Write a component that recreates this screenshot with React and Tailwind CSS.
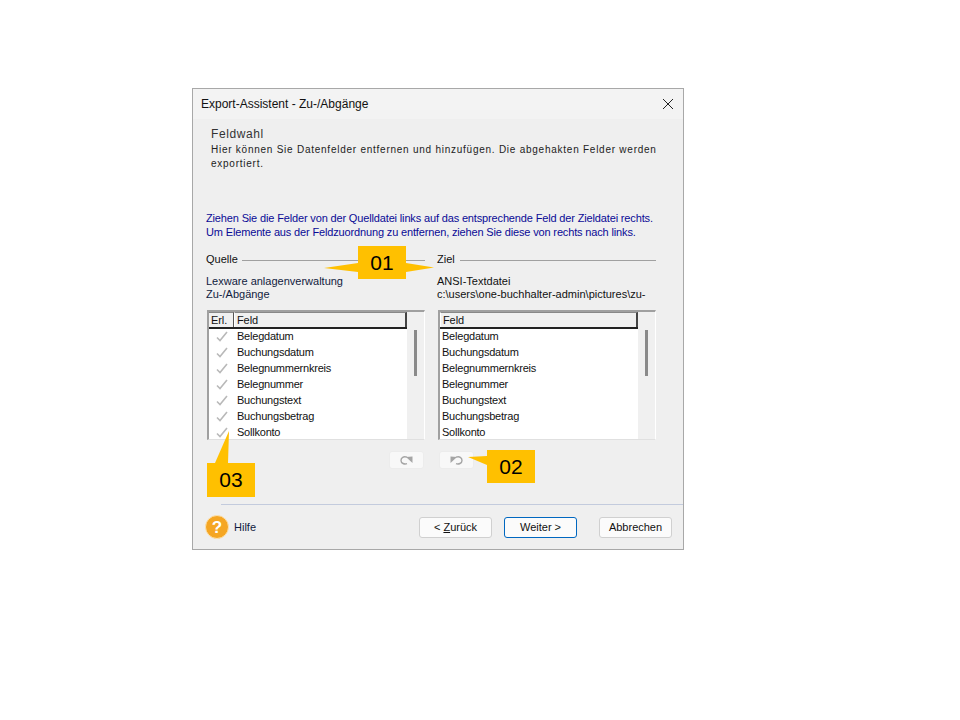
const FONT = "font-['Liberation_Sans',sans-serif]";
const fields = ["Belegdatum","Buchungsdatum","Belegnummernkreis","Belegnummer","Buchungstext","Buchungsbetrag","Sollkonto"];

function Check() {
  return (
    <svg width="12" height="11" viewBox="0 0 12 11" className="shrink-0">
      <path d="M1 6.5 L4 9.5 L11 1" fill="none" stroke="#b9b9b9" strokeWidth="1.6" />
    </svg>
  );
}

function List({ withCheck }) {
  return (
    <div className="h-[130px] border-t-2 border-l-2 border-r border-b border-t-[#a0a0a0] border-l-[#a0a0a0] border-r-white border-b-[#e0e0e0] bg-[#f0f0f0] flex overflow-hidden">
      <div className="flex-1 flex flex-col bg-white min-w-0">
        <div className="h-[17px] flex shrink-0 bg-[#f0f0f0] border-b-2 border-[#222] text-[11px] tracking-[-0.1px] leading-[15px] text-[#111]">
          {withCheck && <div className="w-[25px] pl-[2px] border-r border-[#555] border-t border-t-[#888]">Erl.</div>}
          <div className="flex-1 pl-[2px] border-r-2 border-[#444] border-t border-t-[#888] border-l border-l-white">Feld</div>
        </div>
        <div className="flex-1 overflow-hidden -mt-px">
          {fields.map((f) => (
            <div key={f} className="h-[16px] flex items-center text-[11px] tracking-[-0.22px] leading-[16px] text-[#111]">
              {withCheck && <div className="w-[26px] pl-[7px] flex items-center"><Check /></div>}
              <span className="pl-[2px]">{f}</span>
            </div>
          ))}
        </div>
      </div>
      <div className="w-[17px] shrink-0 flex justify-center pt-[18px]">
        <div className="w-[3px] h-[46px] bg-[#8a8a8a]" />
      </div>
    </div>
  );
}

function Btn({ children, cls = "" }) {
  return (
    <button className={`w-[73px] h-[21px] rounded-[3px] border bg-[#fbfbfb] text-[11px] leading-[18px] text-[#111] ${cls}`}>{children}</button>
  );
}

function SmallBtn({ flip }) {
  return (
    <div className="w-[35px] h-[18px] rounded-[3px] bg-[#f8f8f8] border border-[#ececec] flex items-center justify-center">
      <svg width="13" height="9" viewBox="0 0 13 9" className={flip ? "-scale-x-100" : ""}>
        <path d="M7 1.2 C3.5 0 1 1.6 1 4.4 C1 7.4 4.5 8.6 7 7.6" fill="none" stroke="#a5a5a5" strokeWidth="1.4" />
        <path d="M6 1 L12.5 0.5 L12.5 7 Z" fill="#a5a5a5" />
      </svg>
    </div>
  );
}

function Header({ title, lineCls }) {
  return (
    <div className="flex items-center h-[14px] text-[11px] leading-[14px] text-[#111]">
      <span>{title}</span>
      <div className={`h-px bg-[#a0a0a0] mt-[3px] ml-auto ${lineCls}`} />
    </div>
  );
}

function Callouts() {
  const fill = "#ffc000";
  return (
    <>
      <div className="absolute left-[324px] top-[246px] w-[110px] h-[33px] pointer-events-none">
        <svg width="110" height="33" className="absolute inset-0">
          <path d="M34 0 H82 V17 L110 21.5 L82 26 V33 H34 V26 L0 22 L34 17 Z" fill={fill} />
        </svg>
        <span className="absolute left-[34px] top-0 w-[48px] h-[33px] flex items-center justify-center text-[21px] text-black">01</span>
      </div>
      <div className="absolute left-[468px] top-[450px] w-[67px] h-[33px] pointer-events-none">
        <svg width="67" height="33" className="absolute inset-0">
          <path d="M19 0 H67 V33 H19 V15 L0 7 L19 6 Z" fill={fill} />
        </svg>
        <span className="absolute left-[19px] top-0 w-[48px] h-[33px] flex items-center justify-center text-[21px] text-black">02</span>
      </div>
      <div className="absolute left-[207px] top-[431px] w-[48px] h-[66px] pointer-events-none">
        <svg width="48" height="66" className="absolute inset-0">
          <path d="M8 32 L22 0 L21 32 H48 V66 H0 V32 Z" fill={fill} />
        </svg>
        <span className="absolute left-0 top-[32px] w-[48px] h-[34px] flex items-center justify-center text-[21px] text-black">03</span>
      </div>
    </>
  );
}

export default function App() {
  return (
    <div className={`relative w-[960px] h-[720px] bg-white pt-[88px] pl-[192px] ${FONT}`}>
      <div className="w-[492px] h-[462px] border border-[#a8a8a8] bg-[#efefef] flex flex-col">
        <div className="h-[30px] shrink-0 bg-[#f3f3f3] flex items-center justify-between pl-[8px] pr-[9px]">
          <span className="text-[12px] text-[#111] leading-[16px]">Export-Assistent - Zu-/Abgänge</span>
          <svg width="12" height="12" viewBox="0 0 12 12"><path d="M1 1 L11 11 M11 1 L1 11" stroke="#222" strokeWidth="1" /></svg>
        </div>
        <div className="pl-[18px] pt-[8px] h-[92px] shrink-0 text-[#222]">
          <div className="text-[12px] leading-[14px] tracking-[0.6px] text-[#333]">Feldwahl</div>
          <p className="text-[10px] leading-[14px] tracking-[0.75px] mt-[2px] whitespace-nowrap">Hier können Sie Datenfelder entfernen und hinzufügen. Die abgehakten Felder werden<br />exportiert.</p>
        </div>
        <div className="pl-[13px] text-[11px] tracking-[-0.15px] leading-[14px] text-[#0a0a96] whitespace-nowrap">
          <div>Ziehen Sie die Felder von der Quelldatei links auf das entsprechende Feld der Zieldatei rechts.</div>
          <div>Um Elemente aus der Feldzuordnung zu entfernen, ziehen Sie diese von rechts nach links.</div>
        </div>
        <div className="grid grid-cols-[218px_218px] gap-x-[13px] pl-[14px] mt-[13px]">
          <div className="-ml-[1px]"><Header title="Quelle" lineCls="w-[183px]" /></div>
          <div className="-ml-[1px]"><Header title="Ziel" lineCls="w-[196px]" /></div>
          <div className="-ml-[1px] mt-[9px] h-[35px] text-[11px] leading-[13px] text-[#111b40]">
            <div>Lexware anlagenverwaltung</div>
            <div>Zu-/Abgänge</div>
          </div>
          <div className="-ml-[1px] mt-[9px] h-[35px] text-[11px] leading-[13px] text-[#111] whitespace-nowrap">
            <div>ANSI-Textdatei</div>
            <div>c:\users\one-buchhalter-admin\pictures\zu-</div>
          </div>
          <List withCheck />
          <List />
          <div className="flex justify-end mt-[11px] pr-[1px]"><SmallBtn /></div>
          <div className="flex mt-[11px] pl-[1px]"><SmallBtn flip /></div>
        </div>
        <div className="mt-[35px] ml-[28px] h-px bg-[#c3cbdd]" />
        <div className="flex-1 flex items-center pl-[12px] pr-[11px]">
          <div className="w-[24px] h-[24px] rounded-full bg-[#f5a623] border border-[#fde2b0] flex items-center justify-center text-white text-[17px] font-bold leading-none">?</div>
          <span className="ml-[5px] text-[11px] text-[#111b40]">Hilfe</span>
          <div className="ml-auto flex">
            <Btn cls="border-[#d0d0d0] mr-[12px]">&lt; <span className="underline">Z</span>urück</Btn>
            <Btn cls="border-[#0067c0] mr-[22px]">Weiter &gt;</Btn>
            <Btn cls="border-[#d0d0d0]">Abbrechen</Btn>
          </div>
        </div>
      </div>
      <Callouts />
    </div>
  );
}
